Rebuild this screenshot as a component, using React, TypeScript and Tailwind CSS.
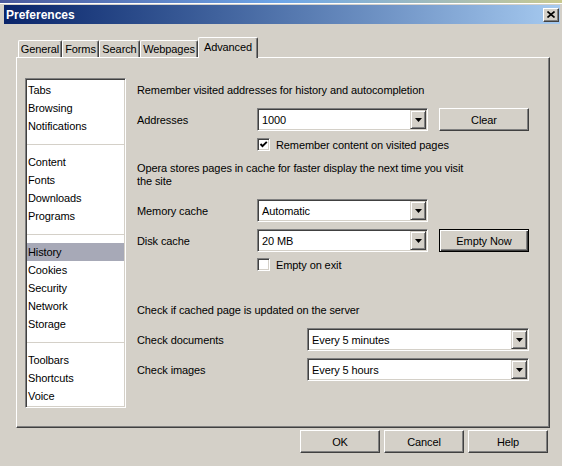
const raised =
  'border border-t-white border-l-white border-r-[#404040] border-b-[#404040] shadow-[inset_-1px_-1px_#808080] bg-[#d4d0c8]'
const sunken =
  'border border-t-[#808080] border-l-[#808080] border-r-white border-b-white shadow-[inset_1px_1px_#404040,inset_-1px_-1px_#d4d0c8]'

const groups = [
  ['Tabs', 'Browsing', 'Notifications'],
  ['Content', 'Fonts', 'Downloads', 'Programs'],
  ['History', 'Cookies', 'Security', 'Network', 'Storage'],
  ['Toolbars', 'Shortcuts', 'Voice'],
]

const tabs = [
  { name: 'General', w: 'w-[44px]' },
  { name: 'Forms', w: 'w-[37px]' },
  { name: 'Search', w: 'w-[41px]' },
  { name: 'Webpages', w: 'w-[58px]' },
]

function Combo({ value, w }: { value: string; w: string }) {
  return (
    <div className={`${w} h-[23px] flex bg-white p-px ${sunken}`}>
      <span className="flex-1 flex items-center pl-[3px] pt-px leading-none">{value}</span>
      <div className="w-[16px] h-full flex items-center justify-center border border-t-[#d4d0c8] border-l-[#d4d0c8] border-r-[#404040] border-b-[#404040] shadow-[inset_1px_1px_#fff,inset_-1px_-1px_#808080] bg-[#d4d0c8]">
        <svg width="7" height="4" viewBox="0 0 7 4">
          <polygon points="0,0 7,0 3.5,4" fill="#000" />
        </svg>
      </div>
    </div>
  )
}

function Button({ label, w, def }: { label: string; w: string; def?: boolean }) {
  return (
    <div
      className={
        def
          ? `${w} h-[23px] flex items-center justify-center pt-px border border-black shadow-[inset_1px_1px_#fff,inset_-1px_-1px_#404040,inset_-2px_-2px_#808080] bg-[#d4d0c8]`
          : `${w} h-[23px] flex items-center justify-center pt-px ${raised}`
      }
    >
      {label}
    </div>
  )
}

function Check({ label, checked }: { label: string; checked?: boolean }) {
  return (
    <div className="h-[13px] flex items-center pl-[120px]">
      <div className={`w-[13px] h-[13px] bg-white flex items-center justify-center ${sunken}`}>
        {checked && (
          <svg width="9" height="9" viewBox="0 0 9 9">
            <path d="M1.5 4 L3.5 6.2 L7.8 1.8" stroke="#000" strokeWidth="1.9" fill="none" />
          </svg>
        )}
      </div>
      <span className="ml-[6px] pt-px">{label}</span>
    </div>
  )
}

export default function App() {
  return (
    <div className="w-[562px] h-[466px] bg-[#d4d0c8] flex flex-col text-[11px] tracking-[-0.1px] text-black font-['Liberation_Sans',Arial,sans-serif] overflow-hidden">
      <div className="h-[3px] bg-linear-to-r from-[#4b5a9c] via-[#6ea6e8] to-[#c9c98f]" />
      <div className="h-px bg-white" />
      <div className="h-px bg-[#d4d0c8]" />
      {/* title bar */}
      <div className="ml-[4px] mr-[2px] h-[19px] bg-linear-to-r from-[#0a246a] to-[#a6caf0] flex items-center justify-between pl-[2px] pr-[1px]">
        <span className="text-white font-bold text-[12px] tracking-normal">Preferences</span>
        <div className={`w-[16px] h-[14px] flex items-center justify-center ${raised}`}>
          <svg width="8" height="7" viewBox="0 0 8 7">
            <path d="M0.5 0.5 L7.5 6.5 M7.5 0.5 L0.5 6.5" stroke="#000" strokeWidth="1.6" />
          </svg>
        </div>
      </div>

      {/* tabs */}
      <div className="ml-[18px] mt-[13px] h-[20px] flex items-end">
        {tabs.map((t) => (
          <div
            key={t.name}
            className={`${t.w} h-[17px] flex items-center justify-center pt-px border-t border-l border-white border-r border-r-[#404040] shadow-[inset_-1px_0_#808080] rounded-t-[2px]`}
          >
            {t.name}
          </div>
        ))}
        <div className="relative z-10 w-[60px] h-[21px] -mb-px flex items-center justify-center pb-px border-t border-l border-white border-r border-r-[#404040] shadow-[inset_-1px_0_#808080] rounded-t-[2px] bg-[#d4d0c8]">
          Advanced
        </div>
      </div>

      {/* panel */}
      <div className={`ml-[16px] w-[534px] h-[371px] flex pt-[20px] pl-[8px] ${raised}`}>
        <div className={`w-[101px] h-[330px] bg-white pt-[2px] px-px ${sunken}`}>
          {groups.map((g, gi) => (
            <div key={gi}>
              {g.map((item) => (
                <div
                  key={item}
                  className={
                    item === 'History'
                      ? 'h-[18px] flex items-center pl-px pt-px bg-[#a7a9b7]'
                      : 'h-[18px] flex items-center pl-px pt-px'
                  }
                >
                  {item}
                </div>
              ))}
              {gi < groups.length - 1 && (
                <div className="h-[18px] flex items-center">
                  <div className="h-px w-full bg-[#d4d0c8]" />
                </div>
              )}
            </div>
          ))}
        </div>

        <div className="ml-[11px] flex flex-col">
          <div className="h-[24px] flex items-center pt-px">Remember visited addresses for history and autocompletion</div>
          <div className="mt-[6px] h-[23px] flex items-center">
            <span className="w-[120px] pt-px">Addresses</span>
            <Combo value="1000" w="w-[171px]" />
            <div className="ml-[11px]">
              <Button label="Clear" w="w-[90px]" />
            </div>
          </div>
          <div className="mt-[7px]">
            <Check label="Remember content on visited pages" checked />
          </div>
          <p className="mt-[10px] w-[336px] leading-[13px] pt-px">
            Opera stores pages in cache for faster display the next time you visit the site
          </p>
          <div className="mt-[11px] h-[23px] flex items-center">
            <span className="w-[120px] pt-px">Memory cache</span>
            <Combo value="Automatic" w="w-[171px]" />
          </div>
          <div className="mt-[7px] h-[23px] flex items-center">
            <span className="w-[120px] pt-px">Disk cache</span>
            <Combo value="20 MB" w="w-[171px]" />
            <div className="ml-[11px]">
              <Button label="Empty Now" w="w-[90px]" def />
            </div>
          </div>
          <div className="mt-[6px]">
            <Check label="Empty on exit" />
          </div>
          <div className="mt-[31px] h-[16px] flex items-center pt-px">Check if cached page is updated on the server</div>
          <div className="mt-[10px] h-[23px] flex items-center">
            <span className="w-[170px] pt-px">Check documents</span>
            <Combo value="Every 5 minutes" w="w-[222px]" />
          </div>
          <div className="mt-[7px] h-[23px] flex items-center">
            <span className="w-[170px] pt-px">Check images</span>
            <Combo value="Every 5 hours" w="w-[222px]" />
          </div>
        </div>
      </div>

      {/* dialog buttons */}
      <div className="mt-[2px] flex justify-end gap-[4px] pr-[14px]">
        <Button label="OK" w="w-[80px]" />
        <Button label="Cancel" w="w-[80px]" />
        <Button label="Help" w="w-[80px]" />
      </div>
    </div>
  )
}
